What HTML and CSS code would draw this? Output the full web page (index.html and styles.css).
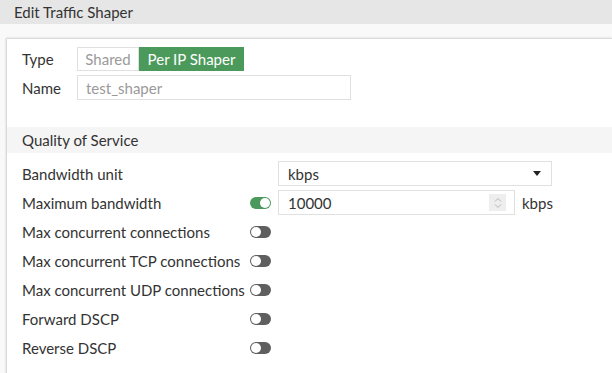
FILE: index.html
```html
<!DOCTYPE html>
<html lang="en">
<head>
    <meta charset="UTF-8">
    <title>Edit Traffic Shaper</title>
    <link rel="stylesheet" href="styles.css">
</head>
<body>
    <div class="titlebar">Edit Traffic Shaper</div>

    <div class="content">
        <div class="card">
            <div class="group">
                <div class="row">
                    <label class="short-label">Type</label>
                    <div class="segmented">
                        <span class="seg">Shared</span>
                        <span class="seg seg-active">Per IP Shaper</span>
                    </div>
                </div>
                <div class="row">
                    <label class="short-label">Name</label>
                    <input type="text" class="text-input name-input" placeholder="test_shaper">
                </div>
            </div>

            <div class="section-title">Quality of Service</div>

            <div class="group qos">
                <div class="row">
                    <label class="long-label">Bandwidth unit</label>
                    <span class="toggle-slot"></span>
                    <div class="select">
                        <span>kbps</span>
                        <span class="caret"></span>
                    </div>
                </div>
                <div class="row">
                    <label class="long-label">Maximum bandwidth</label>
                    <span class="toggle-slot"><span class="toggle on"></span></span>
                    <div class="number-input">
                        <span>10000</span>
                        <span class="spinner">
                            <svg width="8" height="12" viewBox="0 0 8 12">
                                <path d="M1 4.5 L4 1.5 L7 4.5" fill="none" stroke="#b5b5b5" stroke-width="1"/>
                                <path d="M1 7.5 L4 10.5 L7 7.5" fill="none" stroke="#b5b5b5" stroke-width="1"/>
                            </svg>
                        </span>
                    </div>
                    <span class="unit">kbps</span>
                </div>
                <div class="row">
                    <label class="long-label">Max concurrent connections</label>
                    <span class="toggle-slot"><span class="toggle"></span></span>
                </div>
                <div class="row">
                    <label class="long-label">Max concurrent TCP connections</label>
                    <span class="toggle-slot"><span class="toggle"></span></span>
                </div>
                <div class="row">
                    <label class="long-label">Max concurrent UDP connections</label>
                    <span class="toggle-slot"><span class="toggle"></span></span>
                </div>
                <div class="row">
                    <label class="long-label">Forward DSCP</label>
                    <span class="toggle-slot"><span class="toggle"></span></span>
                </div>
                <div class="row">
                    <label class="long-label">Reverse DSCP</label>
                    <span class="toggle-slot"><span class="toggle"></span></span>
                </div>
            </div>
        </div>
    </div>
</body>
</html>
```

FILE: styles.css
```css
body {
    margin: 0;
    font-family: Lato, "Open Sans", sans-serif;
    font-size: 15px;
    color: #333333;
    background-color: #f9f9f9;
    overflow: hidden;
}
.titlebar {
    height: 24px;
    line-height: 24px;
    padding-left: 14px;
    background-color: #e6e6e6;
    color: #333333;
}
.content {
    padding: 14px 0 0 7px;
}
.card {
    background-color: #ffffff;
    border-top: 1px solid #dcdcdc;
    box-shadow: -1px 0 2px rgba(0, 0, 0, 0.18);
    min-height: 340px;
}
.group {
    padding: 5px 0 0 15px;
}
.row {
    display: flex;
    align-items: center;
    height: 29px;
}
.short-label {
    width: 55px;
}
.long-label {
    width: 228px;
    white-space: nowrap;
}
.segmented {
    display: flex;
    height: 24px;
}
.seg {
    display: flex;
    align-items: center;
    justify-content: center;
    border: 1px solid #e0e0e0;
    color: #9a9a9a;
    box-sizing: border-box;
    width: 62px;
}
.seg-active {
    width: 105px;
    background-color: #4c9a5b;
    border-color: #4c9a5b;
    color: #ffffff;
}
.text-input {
    height: 25px;
    box-sizing: border-box;
    border: 1px solid #e0e0e0;
    padding: 0 8px;
    font-family: inherit;
    font-size: 15px;
    color: #333333;
    outline: none;
}
.text-input::placeholder {
    color: #9a9a9a;
}
.name-input {
    width: 274px;
}
.section-title {
    margin-top: 25px;
    height: 26px;
    line-height: 26px;
    padding-left: 15px;
    background-color: #f5f5f5;
}
.qos {
    padding-top: 6px;
}
.toggle-slot {
    width: 28px;
    display: flex;
    align-items: center;
}
.toggle {
    position: relative;
    display: inline-block;
    width: 21px;
    height: 12px;
    border-radius: 6px;
    background-color: #5f5f5f;
}
.toggle::after {
    content: "";
    position: absolute;
    left: 1px;
    top: 1px;
    width: 10px;
    height: 10px;
    border-radius: 50%;
    background-color: #ffffff;
}
.toggle.on {
    background-color: #4c9a5b;
}
.toggle.on::after {
    left: 10px;
}
.select {
    display: flex;
    align-items: center;
    justify-content: space-between;
    width: 274px;
    height: 25px;
    box-sizing: border-box;
    border: 1px solid #e0e0e0;
    padding: 0 10px 0 9px;
}
.caret {
    width: 0;
    height: 0;
    border-left: 4.5px solid transparent;
    border-right: 4.5px solid transparent;
    border-top: 5px solid #222222;
}
.number-input {
    display: flex;
    align-items: center;
    justify-content: space-between;
    width: 237px;
    height: 25px;
    box-sizing: border-box;
    border: 1px solid #e0e0e0;
    padding: 0 8px 0 9px;
}
.spinner {
    display: flex;
    align-items: center;
    justify-content: center;
    width: 17px;
    height: 17px;
    background-color: #eeeeee;
}
.unit {
    margin-left: 7px;
}
```
